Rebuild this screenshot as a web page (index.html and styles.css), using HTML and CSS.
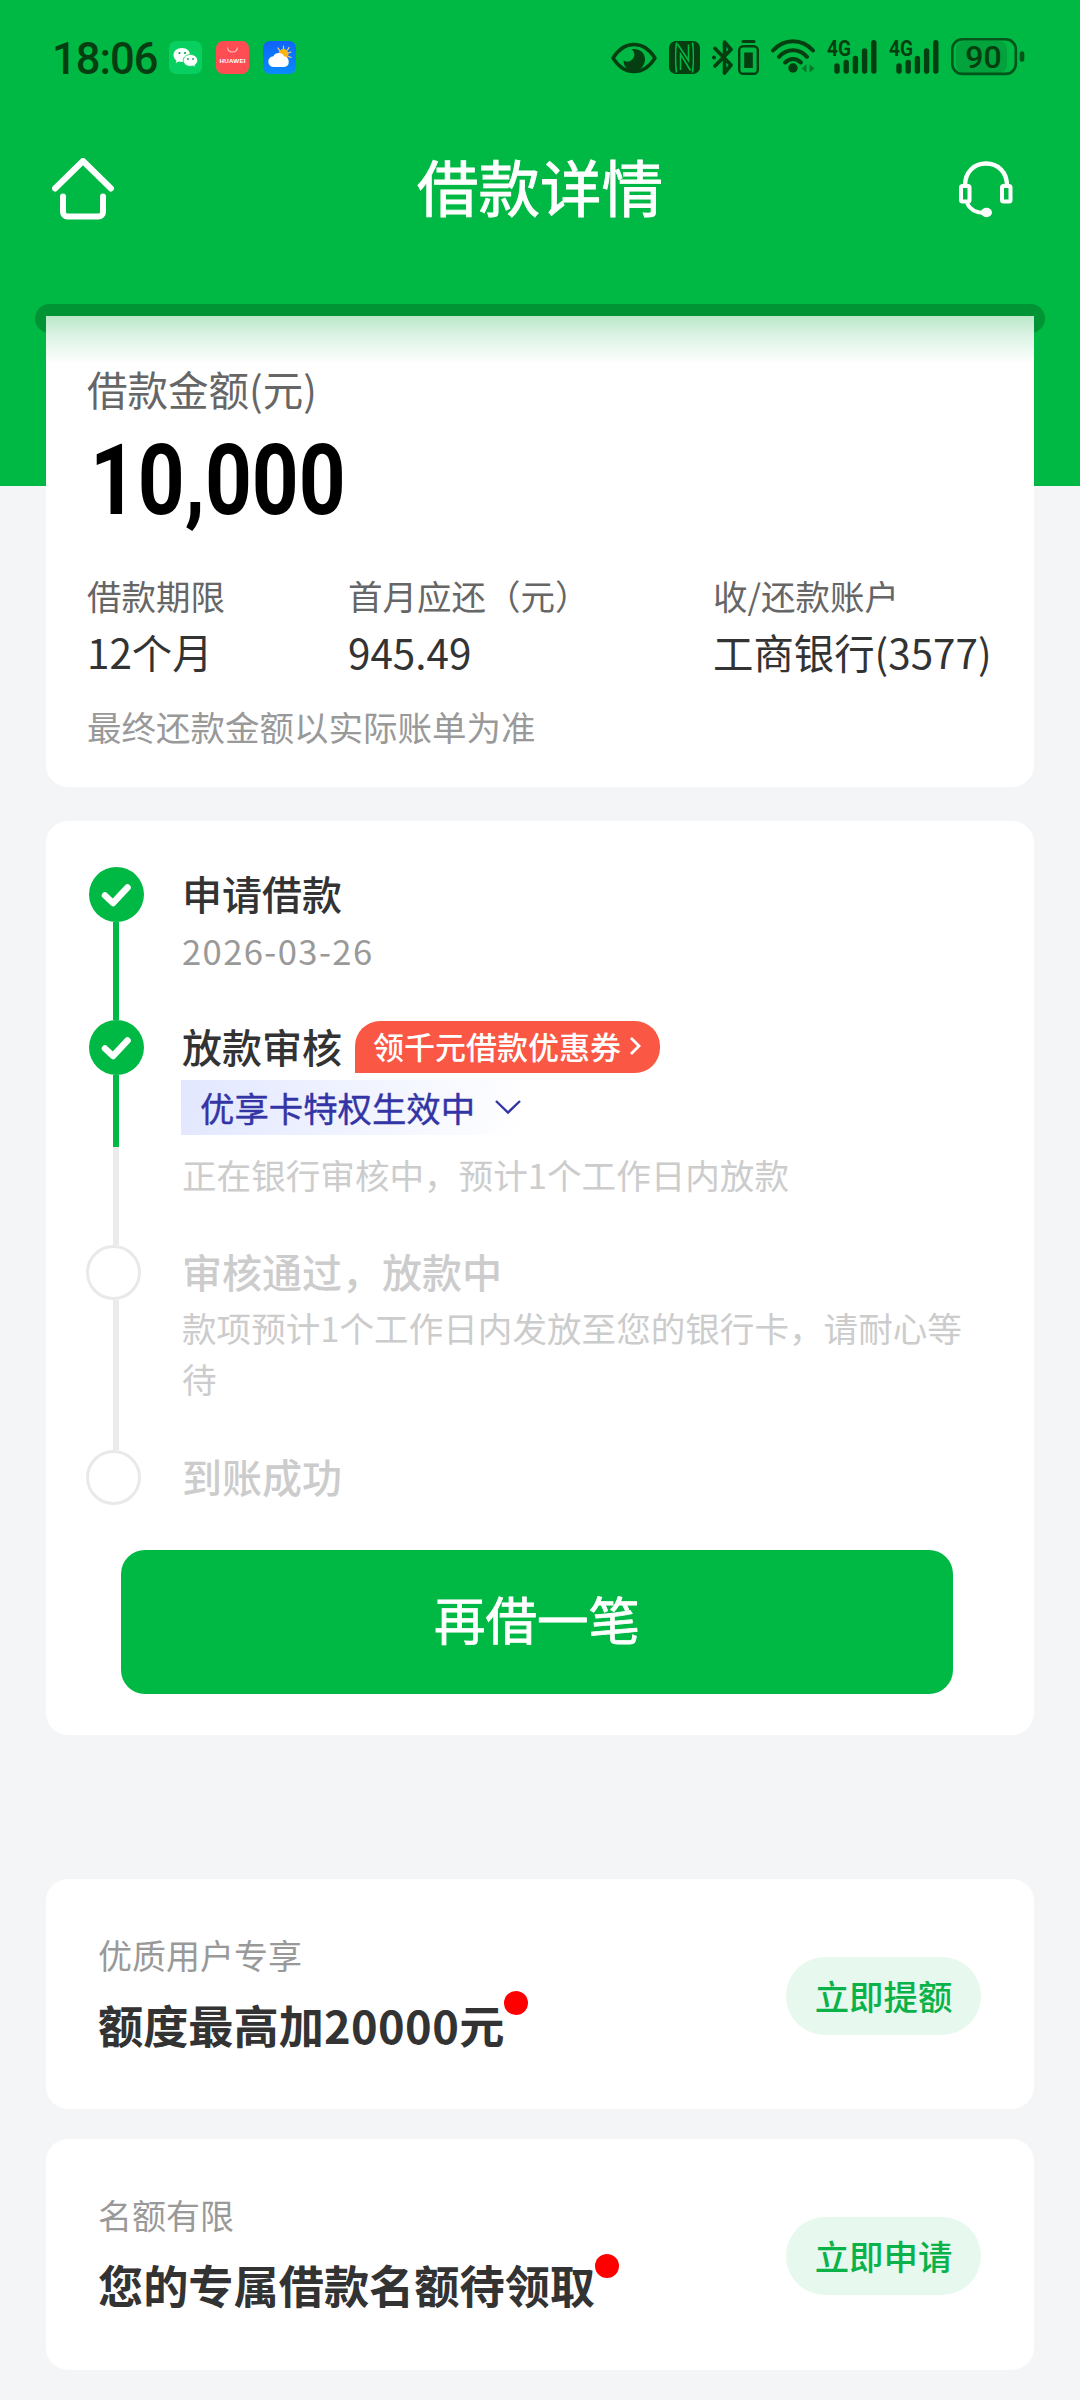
FILE: index.html
```html
<!DOCTYPE html>
<html lang="zh-CN">
<head>
<meta charset="utf-8">
<title>借款详情</title>
<link rel="stylesheet" href="styles.css">
</head>
<body>
<div class="page">
  <div class="status">
    <span class="clock">18:06</span>
    <div class="apps">
      <svg width="33" height="33" viewBox="0 0 33 33">
        <rect width="33" height="33" rx="7" fill="#07cf60"/>
        <path d="M13 7c-5 0-8.500 3-8.500 7 0 2.300 1.200 4.200 3 5.500l-.8 2.600 3-1.500c1 .3 2.200.4 3.300.4C18 21 21 18 21 14s-3-7-8-7z" fill="#fff"/>
        <path d="M21.500 13.500c-4 0-7.300 2.500-7.300 5.900s3.300 5.900 7.300 5.900c.9 0 1.700-.1 2.500-.3l2.500 1.300-.6-2.200c1.600-1.100 2.700-2.800 2.700-4.700 0-3.400-3.100-5.900-7.100-5.900z" fill="#fff" stroke="#07cf60" stroke-width=".8"/>
        <circle cx="10.500" cy="12" r="1.100" fill="#07a050"/><circle cx="16" cy="12" r="1.100" fill="#07a050"/>
        <circle cx="19" cy="18" r=".9" fill="#07a050"/><circle cx="24" cy="18" r=".9" fill="#07a050"/>
      </svg>
      <svg width="33" height="33" viewBox="0 0 33 33">
        <rect width="33" height="33" rx="7" fill="#ff4d54"/>
        <path d="M11.500 6.500c.6 6 9.400 6 10 0" fill="none" stroke="#ffc6c8" stroke-width="1.100"/>
        <text class="app-name" x="16.500" y="21.500" text-anchor="middle" textLength="26">HUAWEI</text>
      </svg>
      <svg width="33" height="33" viewBox="0 0 33 33">
        <defs><linearGradient id="sky" x1="0" y1="0" x2="0" y2="1"><stop offset="0" stop-color="#0f62fa"/><stop offset="1" stop-color="#0a8bfd"/></linearGradient></defs>
        <rect width="33" height="33" rx="7" fill="url(#sky)"/>
        <path d="M20.500 5v3M26 6.500l-1.500 2.500M15 7l1.500 2.300M28 11l-2.500 1M28 16.500l-2.500-1" stroke="#ffd27a" stroke-width="1.200" stroke-linecap="round"/>
        <circle cx="20.500" cy="13" r="5" fill="#fdb515"/>
        <path d="M11 26a5.400 5.400 0 0 1-.6-10.800 6 6 0 0 1 10.600 0A5.500 5.500 0 0 1 21.500 26z" fill="#fff"/>
      </svg>
    </div>
    <div class="indicators">
      <svg class="ind-eye" width="46" height="32" viewBox="0 0 46 32">
        <path d="M2 16C7 8 14 2.500 23 2.500S39 8 44 16c-5 8-12 13.500-21 13.500S7 24 2 16z" fill="none" stroke="#043e11" stroke-width="3.400" stroke-linejoin="round"/>
        <path d="M23 7c6 0 11 4.200 11 10.300S29 29 23 29s-10.500-4.500-10.500-10.500c2.500 1.800 6 1.500 8.500-.8C24.500 14.500 24 10 20.500 7.300 21.300 7.100 22 7 23 7z" fill="#043e11"/>
      </svg>
      <svg class="ind-nfc" width="31" height="33" viewBox="0 0 31 33">
        <rect width="31" height="33" rx="7" fill="#043e11"/>
        <path d="M7.500 1.500C6.500 9 6.500 24 7.500 31.500M11.500 29V13l10 16.500M8.500 3l11 16.500V3.500M23.500 1.500c1 7.500 1 22.500 0 30" fill="none" stroke="#00b944" stroke-width="1.600"/>
      </svg>
      <svg class="ind-bt" width="22" height="35" viewBox="0 0 22 35">
        <path d="M3 8.500 19 25l-6.500 8V2l6.500 7.500L3 26" fill="none" stroke="#043e11" stroke-width="3.600" stroke-linejoin="round" stroke-linecap="round"/>
        <circle cx="2" cy="17.500" r="2" fill="#043e11"/>
      </svg>
      <svg class="ind-cell" width="21" height="35" viewBox="0 0 21 35">
        <path d="M5 1.500h11" stroke="#043e11" stroke-width="3" stroke-linecap="round"/>
        <rect x="1.200" y="6.200" width="18.600" height="27.500" rx="4" fill="none" stroke="#043e11" stroke-width="2.400"/>
        <rect x="6.200" y="12.500" width="8.600" height="15.500" fill="#043e11"/>
      </svg>
      <svg class="ind-wifi" width="44" height="34" viewBox="0 0 44 34">
        <path d="M2 11.500C13-1 31-1 42 11.500M8 17.800c8-8.600 20-8.600 28 0M14.200 23.500c4.600-4.600 11-4.600 15.600 0" fill="none" stroke="#043e11" stroke-width="4" stroke-linecap="round"/>
        <circle cx="22" cy="29" r="4.700" fill="#043e11"/>
        <path d="M30.500 29.500l5-4.300v8.600zM43.500 29.500l-5-4.300v8.600z" fill="#067a2b"/>
      </svg>
      <svg class="ind-sig" width="50" height="40" viewBox="0 -6 50 40">
        <text class="net" x="0" y="16" textLength="24" lengthAdjust="spacingAndGlyphs">4G</text>
        <path d="M10 26v5M19.200 22.500V31M28.400 18.500V31M37.600 11V31M46.800 2.800V31" stroke="#043e11" stroke-width="5.400" stroke-linecap="round"/>
      </svg>
      <svg class="ind-sig" width="50" height="40" viewBox="0 -6 50 40">
        <text class="net" x="0" y="16" textLength="24" lengthAdjust="spacingAndGlyphs">4G</text>
        <path d="M10 26v5M19.200 22.500V31M28.400 18.500V31M37.600 11V31M46.800 2.800V31" stroke="#043e11" stroke-width="5.400" stroke-linecap="round"/>
      </svg>
      <svg class="ind-power" width="74" height="38" viewBox="0 0 74 38">
        <rect x="5" y="3" width="51" height="32" rx="8" fill="#02a23c"/>
        <rect x="1.300" y="1.300" width="63.500" height="34.600" rx="10" fill="none" stroke="#04551a" stroke-width="2.600"/>
        <path d="M71 15.500v6" stroke="#04551a" stroke-width="4.600" stroke-linecap="round"/>
        <text class="charge" x="32.500" y="30" text-anchor="middle">90</text>
      </svg>
    </div>
  </div>

  <header class="nav">
    <svg width="62" height="62" viewBox="0 0 62 62" fill="none" stroke="#fff" stroke-width="6" stroke-linecap="round" stroke-linejoin="round">
      <path d="M3 30.500 31 3l28 27.500"/><path d="M11 38.500V54a4.500 4.500 0 0 0 4.500 4.500h31A4.500 4.500 0 0 0 51 54V38.500"/>
    </svg>
    <h1 class="nav-title">借款详情</h1>
    <svg width="54" height="57" viewBox="0 0 54 57" fill="none" stroke="#fff">
      <path d="M6 24.500C6 11 15 2.500 27 2.500S48 11 48 24.500" stroke-width="4.400"/>
      <rect x="2" y="25" width="8.500" height="15.500" rx="1.500" stroke-width="4"/>
      <rect x="43" y="25" width="8.500" height="15.500" rx="1.500" stroke-width="4"/>
      <path d="M8 42c2.500 6 7.500 9.500 17 10" stroke-width="4"/>
      <ellipse cx="27.500" cy="51.500" rx="5.500" ry="4.700" fill="#fff" stroke="none"/>
    </svg>
  </header>

  <main class="content">
    <div class="slot"></div>
    <section class="card summary">
      <p class="amount-label">借款金额(元)</p>
      <p class="amount"><span class="lead">1</span>0,000</p>
      <dl class="facts">
        <div><dt>借款期限</dt><dd>12个月</dd></div>
        <div><dt>首月应还（元）</dt><dd>945.49</dd></div>
        <div><dt>收/还款账户</dt><dd>工商银行(3577)</dd></div>
      </dl>
      <p class="note">最终还款金额以实际账单为准</p>
    </section>

    <section class="card progress">
      <ol class="steps">
        <li class="step step-applied">
          <div class="rail"><svg class="mark" width="55" height="55" viewBox="0 0 55 55"><circle cx="27.500" cy="27.500" r="27.500" fill="#00b944"/><path d="M16 28.500l8 7.500 14.500-15.500" fill="none" stroke="#fff" stroke-width="6.500" stroke-linecap="round" stroke-linejoin="round"/></svg><i class="line"></i></div>
          <div class="body"><h2>申请借款</h2><p class="date">2026-03-26</p></div>
        </li>
        <li class="step step-review">
          <div class="rail"><svg class="mark" width="55" height="55" viewBox="0 0 55 55"><circle cx="27.500" cy="27.500" r="27.500" fill="#00b944"/><path d="M16 28.500l8 7.500 14.500-15.500" fill="none" stroke="#fff" stroke-width="6.500" stroke-linecap="round" stroke-linejoin="round"/></svg><i class="line"></i></div>
          <div class="body">
            <div class="title-row"><h2>放款审核</h2>
              <span class="coupon">领千元借款优惠券<svg width="14" height="20" viewBox="0 0 14 20"><path d="M3 2l8 8-8 8" fill="none" stroke="#fff" stroke-width="2.800"/></svg></span>
            </div>
            <div class="perk">优享卡特权生效中<svg width="28" height="16" viewBox="0 0 28 16"><path d="M2 2l12 11.500L26 2" fill="none" stroke="#3435a5" stroke-width="2.400"/></svg></div>
            <p>正在银行审核中，预计1个工作日内放款</p>
          </div>
        </li>
        <li class="step step-paying pending">
          <div class="rail"><i class="ring"></i><i class="line"></i></div>
          <div class="body"><h2>审核通过，放款中</h2><p>款项预计1个工作日内发放至您的银行卡，请耐心等待</p></div>
        </li>
        <li class="step step-done pending">
          <div class="rail"><i class="ring"></i></div>
          <div class="body"><h2>到账成功</h2></div>
        </li>
      </ol>
      <button class="again">再借一笔</button>
    </section>

    <section class="card promo">
      <div><p class="promo-tag">优质用户专享</p><p class="promo-title">额度最高加<span class="sum">20000</span>元<i class="dot"></i></p></div>
      <button class="pill">立即提额</button>
    </section>
    <section class="card promo promo-next">
      <div><p class="promo-tag">名额有限</p><p class="promo-title">您的专属借款名额待领取<i class="dot dot-high"></i></p></div>
      <button class="pill">立即申请</button>
    </section>
  </main>
</div>
</body>
</html>
```
FILE: styles.css
```css
* { box-sizing: border-box; }
body { margin: 0; font-family: "Noto Sans CJK SC", "Noto Sans", sans-serif; color: #333; }
h1, h2, p, dl, dd, ol { margin: 0; padding: 0; }
ol { list-style: none; }
svg { display: block; flex: none; }
button { border: 0; padding: 0; font-family: inherit; }

.page { width: 1080px; height: 2400px; overflow: hidden; background: linear-gradient(#00b944 486px, #f4f5f7 486px); }

/* status bar */
.status { display: flex; align-items: flex-start; height: 114px; padding-top: 38px; }
.clock { width: 117px; margin-left: 52px; font: 500 43.500px/43px Roboto, sans-serif; letter-spacing: -1px; color: #043e11; }
.apps { display: flex; gap: 14px; padding-top: 3px; }
.app-name { font: 700 6.200px "Liberation Sans", sans-serif; fill: #fff; }
.indicators { display: flex; margin-left: 315px; }
.ind-eye { margin-top: 4px; }
.ind-nfc { margin: 3px 0 0 12px; }
.ind-bt { margin: 2px 0 0 12px; }
.ind-cell { margin: 2px 0 0 4px; }
.ind-wifi { margin: 1px 0 0 12px; }
.ind-sig { margin: -4px 0 0 12px; }
.ind-power { margin-left: 12px; }
.net { font: 700 22px/22px Roboto, sans-serif; fill: #043e11; }
.charge { font: 500 32px Roboto, sans-serif; fill: #04400f; }

/* title bar */
.nav { display: flex; align-items: center; justify-content: space-between; height: 150px; padding: 0 67px 0 52px; }
.nav-title { margin-left: 7px; font-size: 61.500px; line-height: 84px; font-weight: 400; color: #fff; -webkit-text-stroke: .9px #fff; transform: translateY(-3px); }

.content { padding: 40px 46px 0; }
.slot { height: 29px; margin: 0 -11px -17px; border-radius: 15px; background: #009434; }
.card { position: relative; border-radius: 22px; background: #fff; }

/* loan summary */
.summary { height: 471px; padding: 44px 41px 0; border-radius: 0 0 22px 22px; background: linear-gradient(#b9e8c8, #d9f2e2 18px, #fff 48px); }
.amount-label { font-size: 40.500px; line-height: 58px; color: #666; }
.amount { height: 99px; margin: 13px 0 0 3px; font: 700 98px/99px Roboto, sans-serif; color: #000; transform: scaleX(.835); transform-origin: 0 0; }
.lead { margin-right: 1px; }
.facts { display: flex; margin-top: 40px; }
.facts div:nth-child(1) { width: 261px; }
.facts div:nth-child(2) { width: 365px; }
.facts dt { font-size: 34.500px; line-height: 50px; color: #666; white-space: nowrap; }
.facts dd { margin-top: 3px; font-size: 40.400px; line-height: 58px; white-space: nowrap; }
.note { margin-top: 20px; font-size: 34.500px; line-height: 50px; color: #999; }

/* progress */
.progress { height: 914px; margin-top: 34px; padding: 46px 40px 0; }
.step { display: flex; gap: 36px; }
.step-applied { height: 153px; }
.step-review { height: 225px; }
.step-paying { height: 205px; }
.step-done { height: 100px; }
.rail { display: flex; flex-direction: column; align-items: center; width: 60px; }
.mark { margin-left: 1px; }
.ring { flex: none; width: 55px; height: 55px; margin-right: 5px; border: 3px solid #e9e9e9; border-radius: 50%; }
.line { flex: 1; width: 6px; background: #00b944; }
.step-review .line { background: linear-gradient(#00b944 72px, #ebebeb 72px); }
.pending .line { background: #ebebeb; }
.body { flex: 1; padding-top: 1px; }
.step h2 { font-size: 40px; line-height: 50px; font-weight: 500; }
.step p { font-size: 34.600px; line-height: 50.500px; color: #ccc; }
.step .date { margin-top: 7px; color: #999; letter-spacing: 1.400px; }
.pending h2 { color: #ccc; }
.step.pending p { width: 790px; margin-top: 6px; }
.title-row { display: flex; }
.coupon { display: flex; align-items: center; gap: 7px; height: 52px; margin-left: 13px; padding: 0 18px; border-radius: 25px 25px 25px 0; background: #fb5745; color: #fff; font-size: 31px; line-height: 46px; font-weight: 500; }
.coupon { padding-bottom: 2px; }
.perk { display: flex; align-items: center; gap: 19px; width: 364px; height: 55px; margin: 7px 0 0 -1px; padding: 0 0 2px 19px; background: linear-gradient(100deg, #e2e7ff, #fff 94%); color: #3435a5; font-size: 34.400px; line-height: 50px; -webkit-text-stroke: .4px #3435a5; }
.step .perk + p { margin-top: 14px; }
.again { display: block; width: 832px; height: 144px; margin-left: 35px; padding-bottom: 8px; border-radius: 24px; background: #00b944; color: #fff; font-size: 51.500px; line-height: 136px; -webkit-text-stroke: .8px #fff; }

/* promotions */
.promo { display: flex; justify-content: space-between; height: 230px; margin-top: 144px; padding: 51px 53px 0 52px; }
.promo-next { margin-top: 30px; height: 231px; }
.promo-tag { font-size: 34px; line-height: 50px; color: #999; }
.promo-title { position: relative; width: max-content; margin-top: 13px; font-size: 45.200px; line-height: 64px; font-weight: 700; }
.sum { letter-spacing: .4px; }
.dot { position: absolute; right: -24px; top: -2px; width: 24px; height: 24px; border-radius: 50%; background: #f00; }
.dot-high { top: 1px; }
.pill { width: 195px; height: 78px; margin-top: 27px; padding-bottom: 3px; border-radius: 39px; background: #e7f9ee; color: #0ab24a; font-size: 34.400px; line-height: 72px; font-weight: 500; }
```
